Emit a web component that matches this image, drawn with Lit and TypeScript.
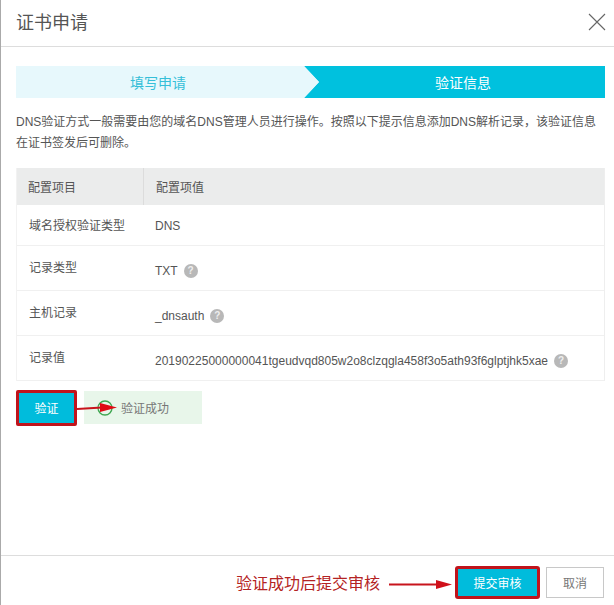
import { LitElement, html, css, svg } from "lit";
import { customElement } from "lit/decorators.js";

const help = html`<span class="help">?</span>`;

@customElement("app-root")
export class AppRoot extends LitElement {
  static styles = css`
    :host {
      display: flex;
      flex-direction: column;
      position: relative;
      width: 614px;
      height: 605px;
      box-sizing: border-box;
      background: #fff;
      border-left: 1px solid #aaa;
      font-family: "Liberation Sans", "Noto Sans CJK SC", sans-serif;
      font-size: 12px;
      color: #555;
      overflow: hidden;
    }
    .head {
      height: 46px;
      flex: none;
      border-bottom: 1px solid #ddd;
      display: flex;
      align-items: center;
      justify-content: space-between;
      padding: 0 8px 0 15px;
    }
    .title { font-size: 18px; color: #555; margin-top: -4px; }
    .close { display: block; margin-top: -3px; }
    .body {
      flex: 1;
      padding: 19px 9px 0 15px;
      display: flex;
      flex-direction: column;
    }
    .steps { height: 32px; display: flex; position: relative; background: #e7f8fc; }
    .step {
      flex: 1;
      display: flex;
      align-items: center;
      justify-content: center;
      font-size: 14px;
      color: #35bfd8;
    }
    .step.on { background: #00c1de; color: #fff; padding-left: 1px; }
    .step.first { flex: 0 0 288px; padding-right: 4px; box-sizing: border-box; }
    .chev { display: block; flex: none; }
    .desc { margin: 14px 0 0; line-height: 21px; color: #555; }
    .table { margin-top: 14px; border-right: 1px solid #eee; border-left: 1px solid #f2f2f2; }
    .thead { display: grid; grid-template-columns: 126px 1fr; height: 37px; background: #ebecec; }
    .thead > div { display: flex; align-items: center; padding-left: 11px; color: #555; }
    .thead > div + div { border-left: 1px solid #dcdcdc; padding-left: 12px; }
    .row {
      display: grid;
      grid-template-columns: 127px 1fr;
      height: 45px;
      box-sizing: border-box;
      border-bottom: 1px solid #f0f0f0;
    }
    .row.first { height: 41px; }
    .key { padding: 14px 0 0 12px; line-height: 16px; color: #555; }
    .row.first .key { padding-top: 13px; }
    .val { padding: 17px 0 0 11px; line-height: 16px; display: flex; align-items: center; align-self: start; gap: 6px; color: #555; }
    .row.first .val { padding-top: 13px; }
    .help {
      width: 14px;
      height: 14px;
      border-radius: 50%;
      background: #b8b8b8;
      color: #eee;
      font-size: 10px;
      font-weight: bold;
      line-height: 14px;
      text-align: center;
      flex: none;
    }
    .verify { display: flex; align-items: flex-start; margin-top: 9px; gap: 7px; }
    .btn-red {
      box-sizing: border-box;
      border: 3px solid #c0141c;
      border-radius: 2px;
      background: #00bcdc;
      color: #fff;
      display: flex;
      align-items: center;
      justify-content: center;
    }
    .verify .btn-red { width: 61px; height: 36px; font-size: 12px; padding-bottom: 1px; }
    .ok {
      margin-top: 1px;
      width: 118px;
      height: 33px;
      background: #e8f6ea;
      display: flex;
      align-items: center;
      padding-left: 37px;
      box-sizing: border-box;
      color: #777;
    }
    .foot {
      flex: none;
      height: 50px;
      box-sizing: border-box;
      border-top: 1px solid #ddd;
      display: flex;
      align-items: flex-start;
      justify-content: flex-end;
      padding: 10px 10px 0 0;
    }
    .note { font-size: 16px; color: #b42323; line-height: 36px; margin-right: 75px; }
    .foot .btn-red { width: 85px; height: 33px; font-size: 12px; margin-right: 6px; border-radius: 3px; }
    .cancel {
      width: 58px;
      height: 31px;
      margin-top: 1px;
      box-sizing: border-box;
      border: 1px solid #c8c8c8;
      display: flex;
      align-items: center;
      justify-content: center;
      color: #777;
    }
    .overlay { position: absolute; left: -1px; top: 0; pointer-events: none; }
  `;

  render() {
    return html`
      <div class="head">
        <div class="title">证书申请</div>
        <svg class="close" width="18" height="18" viewBox="0 0 18 18">
          <path d="M1 1L17 17M17 1L1 17" stroke="#666" stroke-width="1.1" fill="none"></path>
        </svg>
      </div>
      <div class="body">
        <div class="steps">
          <div class="step first">填写申请</div>
          <svg class="chev" width="16" height="32" viewBox="0 0 16 32">
            <path d="M0 0H16V32H0L15 16Z" fill="#00c1de"></path>
            <path d="M0 0L15 16L0 32Z" fill="#e7f8fc"></path>
          </svg>
          <div class="step on">验证信息</div>
        </div>
        <p class="desc">DNS验证方式一般需要由您的域名DNS管理人员进行操作。按照以下提示信息添加DNS解析记录，该验证信息在证书签发后可删除。</p>
        <div class="table">
          <div class="thead"><div>配置项目</div><div>配置项值</div></div>
          <div class="row first"><div class="key">域名授权验证类型</div><div class="val">DNS</div></div>
          <div class="row"><div class="key">记录类型</div><div class="val">TXT ${help}</div></div>
          <div class="row"><div class="key">主机记录</div><div class="val">_dnsauth ${help}</div></div>
          <div class="row"><div class="key">记录值</div><div class="val">20190225000000041tgeudvqd805w2o8clzqgla458f3o5ath93f6glptjhk5xae ${help}</div></div>
        </div>
        <div class="verify">
          <div class="btn-red">验证</div>
          <div class="ok">验证成功</div>
        </div>
      </div>
      <div class="foot">
        <div class="note">验证成功后提交审核</div>
        <div class="btn-red">提交审核</div>
        <div class="cancel">取消</div>
      </div>
      <svg class="overlay" width="614" height="605" viewBox="0 0 614 605">
        ${svg`
          <circle cx="105" cy="408" r="7" fill="none" stroke="#3fa650" stroke-width="1.3"></circle>
          <path d="M77 409L102 407.5" stroke="#c8141c" stroke-width="2.2" fill="none"></path>
          <path d="M100 403L117 407.5L100 412Z" fill="#e00a14"></path>
          <path d="M389 584.5H436" stroke="#c8141c" stroke-width="2.2" fill="none"></path>
          <path d="M436 580L452 584.5L436 589Z" fill="#d0101a"></path>
        `}
      </svg>
    `;
  }
}
